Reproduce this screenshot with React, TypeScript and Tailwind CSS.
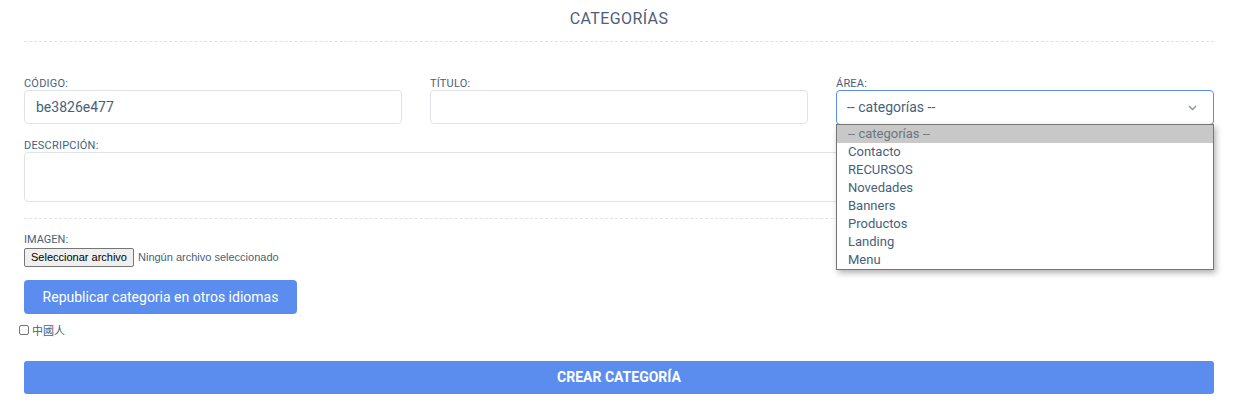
import React from 'react';

const labelCls = 'block text-[11px] leading-[13px] text-[#475f7b] uppercase tracking-[0.2px]';

const areas = ['Contacto', 'RECURSOS', 'Novedades', 'Banners', 'Productos', 'Landing', 'Menu'];

const AreaSelect: React.FC = () => {
  return (
    <div className="relative">
      <div className="flex h-[35px] items-center justify-between rounded-[4px] border border-[#5a8dee] bg-white pl-[10px] pr-[16px] text-[14px] text-[#475f7b]">
        <span>-- categorías --</span>
        <svg width="9" height="6" viewBox="0 0 9 6" fill="none">
          <path d="M1 1l3.5 3.5L8 1" stroke="#8a939d" strokeWidth="1.4" />
        </svg>
      </div>
      <ul className="absolute left-0 right-0 top-[34px] z-10 border border-[#767676] bg-white shadow-[2px_3px_6px_rgba(0,0,0,0.3)] text-[13px] leading-[18px] text-[#475f7b]">
        <li className="bg-[#c8c8c8] px-[11px] text-[#6e757c]">-- categorías --</li>
        {areas.map((a) => (
          <li key={a} className="px-[11px]">
            {a}
          </li>
        ))}
      </ul>
    </div>
  );
};

export default function App() {
  return (
    <div className="w-[1242px] h-[412px] bg-white font-['Roboto',sans-serif] text-[#475f7b]">
      <div className="mx-[24px] w-[1190px]">
        <h4 className="pt-[9px] pb-[12px] text-center text-[16px] leading-[20px] tracking-[0.4px] text-[#4f6079]">CATEGORÍAS</h4>
        <div className="border-t border-dashed border-[#dfe3e7]" />

        <div className="mt-[35px] grid grid-cols-3 gap-x-[28px]">
          <div>
            <div className={labelCls}>Código:</div>
            <div className="flex h-[34px] w-full items-center justify-start rounded-[4px] border border-[#dfe3e7] bg-white">
              <span className="ml-[11px] text-[14px] text-[#475f7b]">be3826e477</span>
            </div>
          </div>
          <div>
            <div className={labelCls}>Título:</div>
            <div className="h-[34px] w-full rounded-[4px] border border-[#dfe3e7] bg-white" />
          </div>
          <div>
            <div className={labelCls}>Área:</div>
            <AreaSelect />
          </div>
        </div>

        <div className="mt-[14px]">
          <div className={labelCls}>Descripción:</div>
          <div className="h-[50px] w-full rounded-[4px] border border-[#dfe3e7]" />
        </div>

        <div className="mt-[16px] border-t border-dashed border-[#dfe3e7]" />

        <div className="mt-[14px]">
          <div className="text-[11px] leading-[14px] text-[#475f7b] mb-[1px]">IMAGEN:</div>
          <div className="flex items-center gap-[4px] text-[11px] font-['Liberation_Sans',sans-serif]">
            <span className="rounded-[2px] border border-[#767676] bg-[#efefef] px-[6px] h-[19px] leading-[17px] text-black">Seleccionar archivo</span>
            <span className="text-[#475f7b]">Ningún archivo seleccionado</span>
          </div>
        </div>

        <div className="mt-[13px] flex h-[34px] w-[273px] items-center justify-center rounded-[4px] bg-[#5a8dee] text-[14px] text-white">
          Republicar categoria en otros idiomas
        </div>

        <div className="ml-[-5px] mt-[8px] flex items-center gap-[3px] text-[11px] font-['Noto_Sans_CJK_SC',sans-serif]">
          <span className="inline-block h-[10px] w-[10px] rounded-[2px] border border-[#767676] bg-white" />
          <span>中國人</span>
        </div>

        <div className="mt-[22px] flex h-[33px] w-full items-center justify-center rounded-[3px] bg-[#5a8dee] text-[14px] font-bold text-white">
          CREAR CATEGORÍA
        </div>
      </div>
    </div>
  );
}
